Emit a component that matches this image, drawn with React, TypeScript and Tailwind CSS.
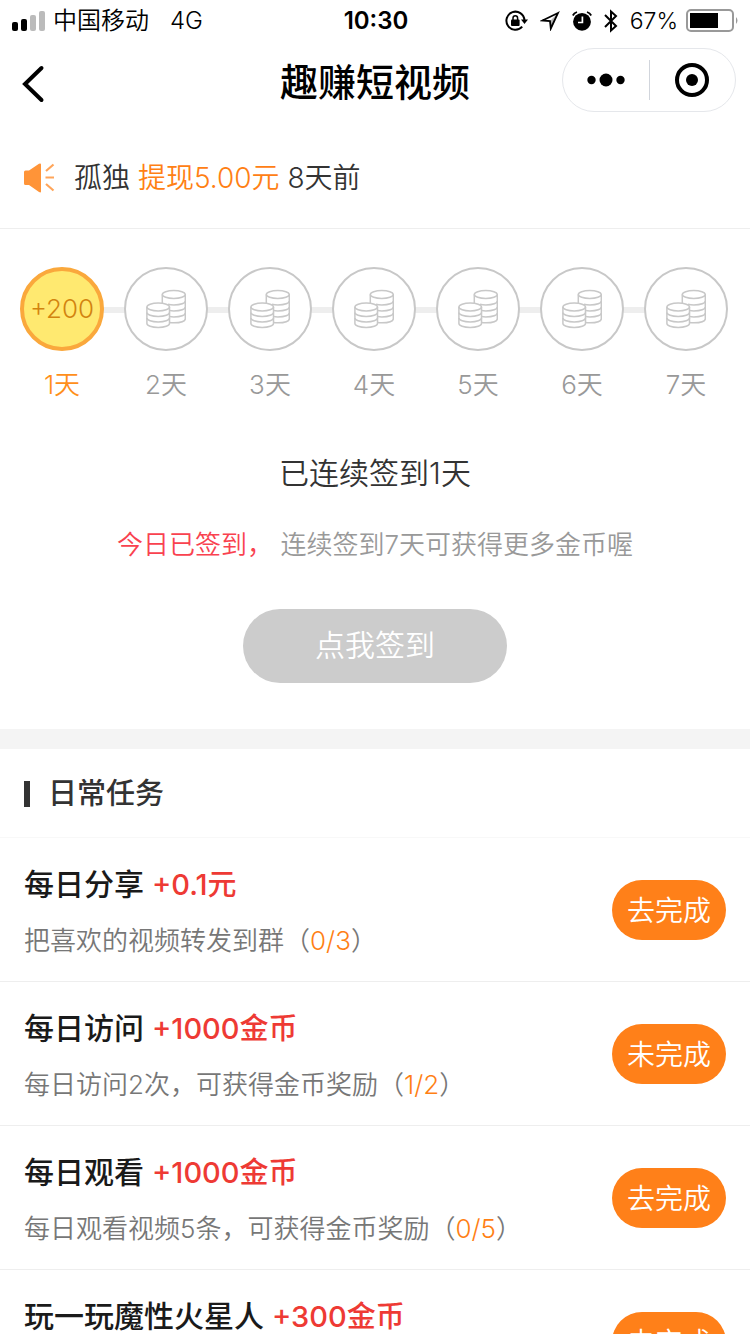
import { useState } from "react";
import type { ReactNode } from "react";

const days = [1, 2, 3, 4, 5, 6, 7];

type Task = {
  title: string;
  reward: string;
  desc: string;
  progress?: string;
  action: string;
};

const tasks: Task[] = [
  { title: "每日分享", reward: "+0.1元", desc: "把喜欢的视频转发到群", progress: "0/3", action: "去完成" },
  { title: "每日访问", reward: "+1000金币", desc: "每日访问2次，可获得金币奖励", progress: "1/2", action: "未完成" },
  { title: "每日观看", reward: "+1000金币", desc: "每日观看视频5条，可获得金币奖励", progress: "0/5", action: "去完成" },
  { title: "玩一玩魔性火星人", reward: "+300金币", desc: "", action: "去完成" },
];

function SignalIcon() {
  return (
    <svg width="34" height="22" viewBox="0 0 34 22" aria-hidden="true">
      <rect x="0" y="12" width="6" height="9" rx="2" fill="#000" />
      <rect x="9" y="9" width="6" height="12" rx="2" fill="#000" />
      <rect x="18" y="5" width="6" height="16" rx="2" fill="#bbb" />
      <rect x="27" y="1" width="6" height="20" rx="2" fill="#bbb" />
    </svg>
  );
}

function RotationLockIcon() {
  return (
    <svg width="23" height="22" viewBox="0 0 23 22" aria-hidden="true">
      <path d="M17.2 16.600A9 9 0 1 1 19.400 10" fill="none" stroke="#000" strokeWidth="2" />
      <path d="M16 9.500h7l-3.500 4.600z" />
      <rect x="6" y="9.500" width="8.600" height="6.500" rx="1" />
      <path d="M8 10V8a2.300 2.300 0 0 1 4.600 0v2" fill="none" stroke="#000" strokeWidth="1.500" />
    </svg>
  );
}

function LocationIcon() {
  return (
    <svg width="20" height="20" viewBox="0 0 20 20" aria-hidden="true">
      <path d="M18 2 2.500 9.500l7.500.5.8 7.500z" fill="none" stroke="#000" strokeWidth="1.800" />
      <path d="M19 1 9.500 10.500l1.500 8z" fillOpacity="0.300" />
    </svg>
  );
}

function AlarmIcon() {
  return (
    <svg width="20" height="20" viewBox="0 0 20 20" aria-hidden="true">
      <circle cx="10" cy="10.800" r="8.900" />
      <path d="M.8 4.500Q2 2 5 1M19.200 4.500Q18 2 15 1" fill="none" stroke="#000" strokeWidth="1.800" />
      <path d="M10.400 5.500v6H6" fill="none" stroke="#fff" strokeWidth="1.700" />
    </svg>
  );
}

function BluetoothIcon() {
  return (
    <svg width="14" height="24" viewBox="0 0 14 24" aria-hidden="true">
      <path d="m1 6 11 11-5 4.500v-19L12 7 1 18" fill="none" stroke="#000" strokeWidth="2" />
    </svg>
  );
}

function BatteryIcon() {
  return (
    <svg width="54" height="24" viewBox="0 0 54 24" aria-hidden="true">
      <rect x="1" y="1" width="46" height="21" rx="4" fill="none" stroke="#999" strokeWidth="2" />
      <rect x="4" y="4" width="28" height="15" />
      <path d="M50 8q3 3.500 0 7z" fill="#999" />
    </svg>
  );
}

function SpeakerIcon() {
  return (
    <svg width="32" height="30" viewBox="0 0 32 30" aria-hidden="true">
      <path d="M0 9Q0 7.500 1.500 7.500H5L15 .8Q17 0 17 1.500v27Q17 30 15 29L5 22H1.500Q0 22 0 20.500z" fill="#ff9438" />
      <path d="m22 8 7.500-6.500M21.500 14.500H30M22 21l7.500 6.500" fill="none" stroke="#ffa55a" strokeWidth="2.200" />
    </svg>
  );
}

function CoinsIcon() {
  return (
    <svg width="40" height="40" viewBox="10 9 40 40" fill="none" stroke="#c8c8c8" strokeWidth="1.500" aria-hidden="true">
      <ellipse cx="37.800" cy="14.500" rx="11.500" ry="4" />
      <path d="M26.300 14.500V23M49.300 14.500v24.300c0 2.300-4.800 4-11.500 4-1.600 0-3-.1-4.300-.3" />
      <path d="M32 24.300c1.700.4 3.700.6 5.800.6 6.700 0 11.500-1.700 11.500-4M33.500 30.600c1.300.2 2.700.3 4.300.3 6.700 0 11.500-1.700 11.500-4M33.500 36.600c1.300.2 2.700.3 4.300.3 6.700 0 11.500-1.700 11.500-4" />
      <ellipse cx="22.200" cy="27" rx="11.300" ry="4" />
      <path d="M10.900 27v16.500c0 2.200 4.800 4 11.300 4s11.300-1.800 11.300-4V27" />
      <path d="M10.900 32.500c0 2.200 4.800 4 11.300 4s11.300-1.800 11.300-4M10.900 38c0 2.200 4.800 4 11.300 4s11.300-1.800 11.300-4" />
    </svg>
  );
}

function StatusBar() {
  return (
    <div className="grid h-[42px] grid-cols-3 items-center pr-[10px] pl-3 text-2xl text-black">
      <div className="flex items-center gap-[7px]">
        <SignalIcon />
        <span className="font-[350]">中国移动</span>
        <span className="ml-[14px]">4G</span>
      </div>
      <span className="text-center font-semibold">10:30</span>
      <div className="flex items-center justify-end gap-3">
        <RotationLockIcon />
        <LocationIcon />
        <AlarmIcon />
        <BluetoothIcon />
        <div className="flex items-center gap-2">
          <span className="text-[23px]">67%</span>
          <BatteryIcon />
        </div>
      </div>
    </div>
  );
}

function NavBar() {
  return (
    <header className="grid h-[86px] grid-cols-[1fr_auto_1fr] items-center px-[14px] pb-[10px] text-black">
      <button aria-label="返回" className="flex h-16 w-10 items-center pl-0.5">
        <svg width="32" height="38" viewBox="0 0 32 38" className="mt-2">
          <path d="M25.500 3 9 19l16.500 16" fill="none" stroke="#000" strokeWidth="4" strokeLinecap="round" />
        </svg>
      </button>
      <h1 className="pt-1 text-[38px] font-medium">趣赚短视频</h1>
      <div className="flex h-16 w-[174px] items-center justify-self-end rounded-full border border-gray-200">
        <button aria-label="更多" className="flex h-full flex-1 items-center justify-center">
          <svg width="38" height="14" viewBox="0 0 38 14">
            <circle cx="4.500" cy="7" r="4.200" />
            <circle cx="19" cy="7" r="6.500" />
            <circle cx="33.500" cy="7" r="4.200" />
          </svg>
        </button>
        <span className="h-10 w-px bg-gray-300" />
        <button aria-label="关闭" className="flex h-full flex-1 items-center justify-center">
          <svg width="36" height="36" viewBox="0 0 36 36">
            <circle cx="18" cy="18" r="15" fill="none" stroke="#000" strokeWidth="4" />
            <circle cx="18" cy="18" r="6" />
          </svg>
        </button>
      </div>
    </header>
  );
}

function Day({ day, done, children }: { day: number; done: boolean; children: ReactNode }) {
  return (
    <li className="relative flex flex-col items-center">
      <div
        className={
          done
            ? "flex size-[84px] items-center justify-center rounded-full border-4 border-[#faa83c] bg-[#ffe970] pb-0.5 text-[26px] text-[#d2830f]"
            : "flex size-[84px] items-center justify-center rounded-full border-2 border-[#c8c8c8] bg-white"
        }
      >
        {children}
      </div>
      <span className={done ? "mt-4 text-[26px] leading-9 text-[#ff8f1a]" : "mt-4 text-[26px] leading-9 text-[#999]"}>
        {day}天
      </span>
    </li>
  );
}

function TaskRow({ task }: { task: Task }) {
  return (
    <li className="flex h-36 items-start justify-between border-b border-[#eee] px-6">
      <div className="pt-6">
        <h3 className="text-[30px] leading-[44px] font-medium text-[#1a1a1a]">
          {task.title} <span className="text-[29px] text-[#ee3a34]">{task.reward}</span>
        </h3>
        <p className="mt-3 text-[26px] leading-[44px] text-[#777]">
          {task.desc}
          {task.progress && (
            <>
              （<span className="text-[#ff8014]">{task.progress}</span>）
            </>
          )}
        </p>
      </div>
      <button className="mt-[42px] h-[60px] w-[114px] rounded-full bg-[#ff8019] pt-0.5 text-[28px] text-white">
        {task.action}
      </button>
    </li>
  );
}

export default function App() {
  const [streak] = useState(1);

  return (
    <div className="flex h-screen flex-col bg-white font-['Inter','Noto_Sans_CJK_SC',sans-serif] font-[350] text-[#333]">
      <StatusBar />
      <NavBar />

      <main className="min-h-0 flex-1 overflow-y-auto [scrollbar-width:none]">
        <div className="flex h-[101px] items-center gap-[18px] border-b border-[#eee] px-6 text-[28px]">
          <SpeakerIcon />
          <p>
            孤独 <span className="text-[#ff8014]">提现5.00元</span> 8天前
          </p>
        </div>

        <section className="flex flex-col items-center pt-[38px] pb-[46px]">
          <ol className="relative flex w-full justify-between pr-[22px] pl-5">
            {/* track behind the day circles */}
            <span className="absolute top-10 right-10 left-10 h-[6px] bg-[#eee]" />
            {days.map((day) => (
              <Day key={day} day={day} done={day <= streak}>
                {day <= streak ? "+200" : <CoinsIcon />}
              </Day>
            ))}
          </ol>

          <h2 className="mt-12 text-[30px] leading-[44px]">已连续签到{streak}天</h2>
          <p className="mt-7 text-[26px] leading-[44px] text-[#999]">
            <span className="text-[#f9424f]">今日已签到，</span> 连续签到7天可获得更多金币喔
          </p>
          <button disabled className="mt-[42px] h-[74px] w-[264px] rounded-full bg-[#ccc] pb-0.5 text-[30px] text-white">
            点我签到
          </button>
        </section>

        <section className="border-t-[20px] border-[#f4f4f4]">
          <h2 className="flex h-[89px] items-center gap-[18px] border-b border-[#f8f8f8] px-6 pt-0.5 text-[29px] font-medium">
            <span className="h-[26px] w-[6px] bg-[#333]" />
            日常任务
          </h2>
          <ul>
            {tasks.map((task) => (
              <TaskRow key={task.title} task={task} />
            ))}
          </ul>
        </section>
      </main>
    </div>
  );
}
